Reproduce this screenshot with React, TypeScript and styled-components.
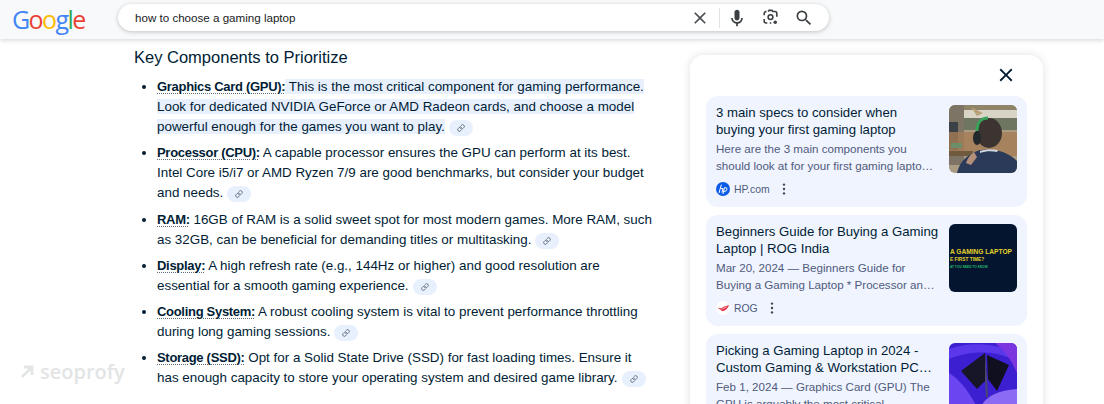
import { Link } from "lucide-react";
import styled, { createGlobalStyle } from "styled-components";

type Part = { label: string; text: string; selected?: boolean };

const parts: Part[] = [
  {
    label: "Graphics Card (GPU):",
    text: " This is the most critical component for gaming performance. Look for dedicated NVIDIA GeForce or AMD Radeon cards, and choose a model powerful enough for the games you want to play.",
    selected: true,
  },
  {
    label: "Processor (CPU):",
    text: " A capable processor ensures the GPU can perform at its best. Intel Core i5/i7 or AMD Ryzen 7/9 are good benchmarks, but consider your budget and needs.",
  },
  {
    label: "RAM:",
    text: " 16GB of RAM is a solid sweet spot for most modern games. More RAM, such as 32GB, can be beneficial for demanding titles or multitasking.",
  },
  {
    label: "Display:",
    text: " A high refresh rate (e.g., 144Hz or higher) and good resolution are essential for a smooth gaming experience.",
  },
  {
    label: "Cooling System:",
    text: " A robust cooling system is vital to prevent performance throttling during long gaming sessions.",
  },
  {
    label: "Storage (SSD):",
    text: " Opt for a Solid State Drive (SSD) for fast loading times. Ensure it\nhas enough capacity to store your operating system and desired game library.",
  },
];

function ClearIcon({ size, color }: { size: number; color: string }) {
  return (
    <svg width={size} height={size} viewBox="0 0 24 24" fill={color}>
      <path d="M19 6.41L17.59 5 12 10.59 6.41 5 5 6.41 10.59 12 5 17.59 6.41 19 12 13.41 17.59 19 19 17.59 13.41 12z" />
    </svg>
  );
}

function MicIcon() {
  return (
    <svg width="20" height="20" viewBox="0 0 24 24" fill="#3c4043">
      <path d="M12 15c1.66 0 3-1.31 3-2.97v-7.02c0-1.66-1.34-3.01-3-3.01s-3 1.34-3 3.01v7.02c0 1.66 1.34 2.97 3 2.97z" />
      <path d="m11 18.08h2v3.92h-2z" />
      <path d="m7.05 16.87c-1.27-1.33-2.05-2.83-2.05-4.87h2c0 1.45 0.56 2.42 1.47 3.38v0.32l-1.15 1.18z" />
      <path d="m12 16.93a4.97 5.25 0 0 1 -3.54 -1.55l-1.41 1.49c1.26 1.34 3.02 2.13 4.95 2.13 3.87 0 6.99-2.92 6.99-7h-1.99c0 2.92-2.24 4.93-5 4.93z" />
    </svg>
  );
}

function LensIcon() {
  return (
    <svg width="19" height="19" viewBox="0 0 24 24" fill="none" stroke="#3c4043" strokeWidth="2">
      <path d="M9 4.5l1.2-1.5h3.6L15 4.5h2.5A2.5 2.5 0 0 1 20 7v4" />
      <path d="M7 4.5h-.5A2.5 2.5 0 0 0 4 7v2M4 14v2.5A2.5 2.5 0 0 0 6.5 19H8M11 19h2" />
      <circle cx="12" cy="11.5" r="3" />
      <circle cx="18" cy="18" r="2.2" fill="#3c4043" stroke="none" />
    </svg>
  );
}

function SearchIcon() {
  return (
    <svg width="20" height="20" viewBox="0 0 24 24" fill="#3c4043">
      <path d="M15.5 14h-.79l-.28-.27A6.471 6.471 0 0 0 16 9.5 6.5 6.5 0 1 0 9.5 16c1.61 0 3.09-.59 4.23-1.57l.27.28v.79l5 4.99L20.49 19l-4.99-5zm-6 0C7.01 14 5 11.99 5 9.5S7.01 5 9.5 5 14 7.01 14 9.5 11.99 14 9.5 14z" />
    </svg>
  );
}

function MoreIcon() {
  return (
    <svg width="4" height="12" viewBox="0 0 4 12" fill="#444746">
      <circle cx="2" cy="1.6" r="1.2" />
      <circle cx="2" cy="6" r="1.2" />
      <circle cx="2" cy="10.4" r="1.2" />
    </svg>
  );
}

function HpLogo() {
  return (
    <svg width="14" height="14" viewBox="0 0 14 14">
      <circle cx="7" cy="7" r="7" fill="#0a5ce6" />
      <path d="M5.4 2.6L3 11M5 6.6h2L5.9 10.6M8.4 5.6L7 12M8.4 5.8h1.7c.8 0 1 .5.8 1.3l-.3 1c-.2.8-.7 1.2-1.5 1.2H8" fill="none" stroke="#fff" strokeWidth="1" />
    </svg>
  );
}

function RogLogo() {
  return (
    <svg width="14" height="14" viewBox="0 0 14 14">
      <circle cx="7" cy="7" r="7" fill="#fff" />
      <path d="M.8 6.6c2.6 1.6 4.2 2.6 5.4 3.6 2.6-.2 5.6-2.4 7-6.2-2.6 1-5.6 1.4-8 3.2C4 7.4 2.4 7 .8 6.6z" fill="#e3344a" />
      <path d="M5.6 8.2c1.6-.8 3.2-1.6 5-2.2" stroke="#fff" strokeWidth=".6" fill="none" />
    </svg>
  );
}

function GamerPhoto() {
  return (
    <svg width="68" height="68" viewBox="0 0 68 68">
      <rect width="68" height="68" fill="#a99c82" />
      <rect x="15" y="0" width="53" height="5" fill="#8f8468" />
      <rect x="15" y="5" width="53" height="8" fill="#d8d5c6" />
      <rect x="15" y="13" width="53" height="12" fill="#6e7561" />
      <path d="M22 2l12 6-6 3z" fill="#b8a079" />
      <rect x="0" y="0" width="15" height="60" fill="#7d7466" />
      <rect x="0" y="17" width="9" height="28" fill="#3a4248" />
      <rect x="0" y="27" width="68" height="24" fill="#a57c55" opacity=".8" />
      <rect x="0" y="46" width="24" height="5" fill="#6f5a3e" />
      <rect x="2" y="38" width="11" height="5" fill="#6c8f6a" />
      <path d="M8 68c2-8 6-16 20-22 6-2 16-2 22 0 8 2 14 6 18 10v12z" fill="#2c3a5a" />
      <path d="M31 46c6-2 12-2 18-1l-1 2c-6-1-11-1-17 1z" fill="#cfd6dc" />
      <ellipse cx="40" cy="28" rx="13" ry="15" fill="#3b3430" />
      <path d="M28 26c0-10 6-13 11-13" fill="none" stroke="#39a35b" strokeWidth="3" />
      <ellipse cx="28" cy="33" rx="4" ry="7" fill="#23282c" />
      <path d="M17 58c2-6 5-9 8-11l3 5-6 8z" fill="#b48f7a" />
    </svg>
  );
}

function PromoPhoto() {
  return (
    <svg width="68" height="68" viewBox="0 0 68 68">
      <rect width="68" height="68" fill="#04152f" />
      <text x="1" y="30" fontFamily="Liberation Sans, sans-serif" fontSize="6.6" fontWeight="700" fill="#e4d32a">
        A GAMING LAPTOP
      </text>
      <text x="1" y="37" fontFamily="Liberation Sans, sans-serif" fontSize="4.8" fontWeight="700" fill="#e4d32a">
        E FIRST TIME?
      </text>
      <text x="1" y="44" fontFamily="Liberation Sans, sans-serif" fontSize="3.2" fontWeight="700" fill="#26b56c">
        AT YOU NEED TO KNOW
      </text>
    </svg>
  );
}

function LaptopPhoto() {
  return (
    <svg width="68" height="68" viewBox="0 0 68 68">
      <rect width="68" height="68" fill="#3b1fd0" />
      <path d="M0 6c18-6 40-8 68 4v8C44 6 20 8 0 16z" fill="#5a37ea" />
      <path d="M0 30c10 6 20 18 30 38H0z" fill="#6b46f0" />
      <path d="M46 0c8 6 16 16 22 30V0z" fill="#7a35e0" />
      <path d="M30 68c4-12 14-20 38-22v22z" fill="#8b6bf4" />
      <path d="M12 28L36 10l2 26-10 10z" fill="#171528" />
      <path d="M38 12l22 10-12 26-9-12z" fill="#100f20" />
      <path d="M36 10l2 26 1 18-2 0-1-18z" fill="#4a4a70" />
    </svg>
  );
}

const sources = [
  {
    title: "3 main specs to consider when\nbuying your first gaming laptop",
    snippet: "Here are the 3 main components you should look at for your first gaming laptop. Graphics card and processor",
    site: "HP.com",
    logo: <HpLogo />,
    photo: <GamerPhoto />,
  },
  {
    title: "Beginners Guide for Buying a Gaming Laptop | ROG India",
    snippet: "Mar 20, 2024 — Beginners Guide for Buying a Gaming Laptop * Processor and graphics card explained",
    site: "ROG",
    logo: <RogLogo />,
    photo: <PromoPhoto />,
  },
  {
    title: "Picking a Gaming Laptop in 2024 - Custom Gaming & Workstation PC Builders",
    snippet: "Feb 1, 2024 — Graphics Card (GPU) The GPU is arguably the most critical",
    site: "Puget",
    logo: <HpLogo />,
    photo: <LaptopPhoto />,
  },
];

export default function App() {
  return (
    <Page>
      <GlobalStyle />
      <Header>
        <Logo>
          <Letter $color="#4285f4">G</Letter>
          <Letter $color="#ea4335">o</Letter>
          <Letter $color="#fbbc05">o</Letter>
          <Letter $color="#4285f4">g</Letter>
          <Letter $color="#34a853">l</Letter>
          <Letter $color="#ea4335">e</Letter>
        </Logo>
        <SearchBox>
          <Query>how to choose a gaming laptop</Query>
          <IconSlot $width={32} $shift={4}>
            <ClearIcon size={20} color="#4d5156" />
          </IconSlot>
          <Divider />
          <IconSlot $width={33} $shift={1}>
            <MicIcon />
          </IconSlot>
          <IconSlot $width={33} $shift={0}>
            <LensIcon />
          </IconSlot>
          <IconSlot $width={34} $shift={0}>
            <SearchIcon />
          </IconSlot>
        </SearchBox>
      </Header>
      <Content>
        <Article>
          <Heading>Key Components to Prioritize</Heading>
          <List>
            {parts.map((part) => (
              <Item key={part.label}>
                <Label>{part.label}</Label>
                {part.selected ? <Selected>{part.text}</Selected> : <Body>{part.text}</Body>}
                <Chip>
                  <Link size={8} strokeWidth={2.2} />
                </Chip>
              </Item>
            ))}
          </List>
        </Article>
        <Panel>
          <PanelTop>
            <ClearIcon size={22} color="#001d35" />
          </PanelTop>
          <Cards>
            {sources.map((source) => (
              <Card key={source.title}>
                <CardText>
                  <CardTitle>{source.title}</CardTitle>
                  <Snippet>{source.snippet}</Snippet>
                  <SourceRow>
                    {source.logo}
                    <SiteName>{source.site}</SiteName>
                    <MoreIcon />
                  </SourceRow>
                </CardText>
                <Thumb>{source.photo}</Thumb>
              </Card>
            ))}
          </Cards>
        </Panel>
      </Content>
      <Watermark>
        <svg width="15" height="15" viewBox="0 0 15 15" fill="none" stroke="currentColor" strokeWidth="2.8">
          <path d="M2 13L12 3M4 3h8v8" />
        </svg>
        seoprofy
      </Watermark>
    </Page>
  );
}

const GlobalStyle = createGlobalStyle`
  html, body {
    margin: 0;
    background: #fff;
    overflow: hidden;
  }
`;

const Page = styled.div`
  position: relative;
  width: 1104px;
  height: 404px;
  overflow: hidden;
  font-family: "Liberation Sans", Arial, sans-serif;
  color: #001d35;
`;

const Header = styled.header`
  display: flex;
  align-items: center;
  height: 39px;
  padding-left: 12px;
  background: #f8f9fa;
  box-shadow: 0 1px 5px rgba(32, 33, 36, 0.2);
`;

const Logo = styled.div`
  flex: none;
  width: 106px;
  margin-top: -1px;
  font-family: "Open Sans", sans-serif;
  font-size: 25px;
  font-weight: 500;
  letter-spacing: -1.6px;
`;

const Letter = styled.span<{ $color: string }>`
  color: ${(p) => p.$color};
`;

const SearchBox = styled.div`
  display: flex;
  align-items: center;
  width: 711px;
  height: 27px;
  margin-top: -4px;
  padding: 0 8px 0 17px;
  box-sizing: border-box;
  background: #fff;
  border-radius: 14px;
  box-shadow: 0 1px 4px rgba(32, 33, 36, 0.25);
`;

const Query = styled.div`
  flex: 1;
  font-size: 11.6px;
  color: #202124;
`;

const IconSlot = styled.div<{ $width: number; $shift: number }>`
  display: flex;
  justify-content: center;
  width: ${(p) => p.$width}px;
  padding-right: ${(p) => p.$shift}px;
  box-sizing: border-box;
`;

const Divider = styled.div`
  width: 1px;
  height: 20px;
  margin: 0 1px;
  background: #e0e2e5;
`;

const Content = styled.main`
  display: flex;
  align-items: flex-start;
  padding-left: 134px;
`;

const Article = styled.article`
  width: 520px;
  padding-top: 7px;
  margin-right: 36px;
`;

const Heading = styled.h2`
  margin: 0 0 9px;
  font-size: 16.5px;
  font-weight: 400;
  line-height: 22px;
`;

const List = styled.ul`
  margin: 0;
  padding: 0 0 0 23px;
  font-size: 13.4px;
  line-height: 20px;
`;

const Item = styled.li`
  margin-bottom: 6.3px;
`;

const Label = styled.strong`
  font-size: 13px;
  font-weight: 700;
  letter-spacing: -0.3px;
  text-decoration: underline dotted #5f6b7a 1px;
  text-underline-offset: 2px;
`;

const Body = styled.span`
  white-space: pre-line;
`;

const Selected = styled.span`
  background: #e8f0fe;
`;

const Chip = styled.span`
  display: inline-flex;
  align-items: center;
  justify-content: center;
  width: 24px;
  height: 16px;
  margin: -3px 0 -3px 4px;
  vertical-align: -1px;
  border-radius: 8px;
  background: #e8f0fe;
  color: #3c4a5c;
`;

const Panel = styled.aside`
  width: 353px;
  height: 400px;
  margin-top: 16px;
  padding: 0 16px;
  box-sizing: border-box;
  background: #fff;
  border-radius: 14px;
  box-shadow: 0 0 8px rgba(32, 33, 36, 0.14);
`;

const PanelTop = styled.div`
  display: flex;
  justify-content: flex-end;
  height: 41px;
  padding: 9px 10px 0 0;
  box-sizing: border-box;
`;

const Cards = styled.div`
  display: flex;
  flex-direction: column;
  gap: 8px;
`;

const Card = styled.div`
  display: flex;
  gap: 8px;
  height: 111px;
  padding: 9px 10px 0;
  box-sizing: border-box;
  background: #f0f4ff;
  border-radius: 12px;
`;

const CardText = styled.div`
  flex: 1;
  min-width: 0;
`;

const CardTitle = styled.div`
  display: -webkit-box;
  -webkit-box-orient: vertical;
  -webkit-line-clamp: 2;
  overflow: hidden;
  white-space: pre-line;
  font-size: 13.2px;
  line-height: 16.5px;
`;

const Snippet = styled.div`
  display: -webkit-box;
  -webkit-box-orient: vertical;
  -webkit-line-clamp: 2;
  overflow: hidden;
  margin-top: 3px;
  padding-right: 6px;
  font-size: 11.6px;
  line-height: 16.5px;
  color: #4f5b7c;
`;

const SourceRow = styled.div`
  display: flex;
  align-items: center;
  margin-top: 7px;
  height: 16px;
  font-size: 10.4px;
  color: #4f5b7c;
`;

const SiteName = styled.span`
  margin: 0 12px 0 4px;
`;

const Thumb = styled.div`
  flex: none;
  width: 68px;
  height: 68px;
  overflow: hidden;
  border-radius: 6px;
`;

const Watermark = styled.div`
  position: absolute;
  left: 20px;
  top: 358px;
  display: flex;
  align-items: center;
  gap: 5px;
  font-family: "Open Sans", sans-serif;
  font-size: 20px;
  font-weight: 600;
  color: #e3e4e5;
`;
